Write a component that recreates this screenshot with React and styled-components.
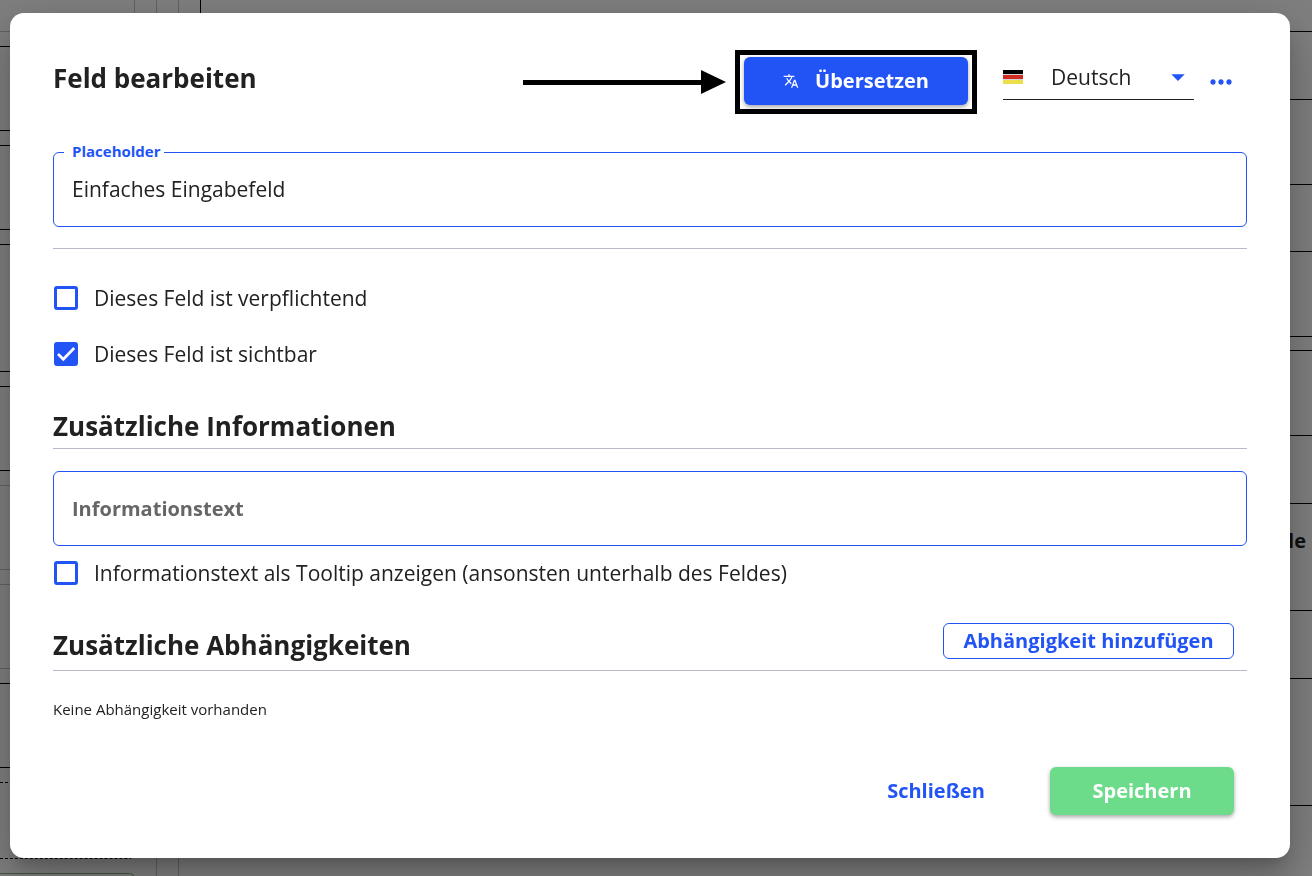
import React, { useState } from "react";
import styled, { createGlobalStyle } from "styled-components";
import { MdTranslate, MdMoreHoriz, MdArrowDropDown } from "react-icons/md";

const blue = "#2254f5";
const ink = "#212121";

const GlobalStyle = createGlobalStyle`
  *, *::before, *::after { box-sizing: border-box; }
  body {
    margin: 0;
    background: #fff;
    color: ${ink};
    font-family: "Open Sans", "Noto Sans", sans-serif;
    font-size: 21px;
    line-height: 28px;
  }
  button, input, select { font: inherit; color: inherit; }
  h2, h3, p { margin: 0; }
`;

/* Form builder behind the dialog */

const Builder = styled.div`
  display: flex;
  gap: 21px;
  height: 100vh;
  overflow: hidden;
`;

const Palette = styled.aside`
  width: 157px;
  flex: none;
  padding-right: 21px;
  border-right: 1px solid #c4c4c4;
`;

const PaletteHead = styled.div`
  height: 32px;
  margin-bottom: 14px;
  border: solid #c4c4c4;
  border-width: 0 1px 1px 0;
`;

const itemHeights = { short: 77, normal: 85, tall: 128 };

const PaletteItem = styled.div`
  height: ${(p) => itemHeights[p.$size || "normal"]}px;
  margin-bottom: 14px;
  border: 1px ${(p) => (p.$dashed ? "dashed" : "solid")} ${(p) => p.$color || "#000"};
  border-left: 0;
  border-radius: 0 6px 6px 0;
`;

const Canvas = styled.main`
  flex: 1;
  padding-left: 21px;
  border-left: 1px solid #c4c4c4;
`;

const CanvasBlock = styled.section`
  margin-bottom: 13px;
  border-left: 1px solid #000;
  border-bottom: 1px solid #000;
  border-top: ${(p) => (p.$open ? "0" : "1px solid #000")};
`;

const CanvasRow = styled.div`
  height: ${(p) => p.$height}px;
  display: flex;
  justify-content: flex-end;
  padding: 23px 6px 0 0;
  font-size: 20px;
  font-weight: 700;
  & + & { border-top: 1px solid #000; }
`;

/* Dialog */

const Backdrop = styled.div`
  position: fixed;
  inset: 0;
  padding: 13px 22px 18px 10px;
  background: rgba(0, 0, 0, 0.5);
  overflow: auto;
`;

const Dialog = styled.form`
  min-height: 100%;
  display: flex;
  flex-direction: column;
  padding: 37px 43px 43px;
  background: #fff;
  border-radius: 14px;
  box-shadow: 0 11px 15px -7px rgba(0, 0, 0, 0.2), 0 24px 38px 3px rgba(0, 0, 0, 0.14),
    0 9px 46px 8px rgba(0, 0, 0, 0.12);
`;

const Header = styled.header`
  display: flex;
  align-items: center;
  margin-bottom: 38px;
  padding-right: 10px;
`;

const Title = styled.h2`
  flex: 1;
  padding-bottom: 8px;
  font-size: 26px;
  line-height: 36px;
  font-weight: 700;
`;

const Highlight = styled.div`
  margin: 0 26px 0 9px;
  padding: 2px 4px 4px;
  border: 5px solid #000;
`;

const Button = styled.button`
  display: flex;
  align-items: center;
  justify-content: center;
  gap: 16px;
  min-width: ${(p) => p.$width}px;
  height: 48px;
  padding: 0 16px;
  border: 0;
  border-radius: 6px;
  background: ${(p) => p.$fill || "transparent"};
  color: ${(p) => (p.$fill ? "#fff" : blue)};
  font-size: 20px;
  font-weight: 700;
  box-shadow: ${(p) => (p.$fill ? "0 2px 4px rgba(0, 0, 0, 0.35)" : "none")};
`;

const OutlineButton = styled.button`
  height: 36px;
  min-width: 291px;
  margin-bottom: 4px;
  padding: 0 16px;
  border: 1px solid ${blue};
  border-radius: 6px;
  background: #fff;
  color: ${blue};
  font-size: 20px;
  font-weight: 700;
`;

const Language = styled.label`
  display: flex;
  align-items: center;
  align-self: flex-start;
  width: 191px;
  height: 50px;
  padding-top: 5px;
  margin-right: 11px;
  border-bottom: 1px solid ${ink};
  & > svg:last-child { flex: none; color: ${blue}; }
`;

const LanguageSelect = styled.select`
  flex: 1;
  min-width: 0;
  margin-left: 28px;
  padding: 0;
  border: 0;
  background: transparent;
  appearance: none;
`;

const MoreButton = styled.button`
  display: flex;
  padding: 0;
  border: 0;
  background: transparent;
  color: ${blue};
`;

const Field = styled.div`
  position: relative;
`;

const FieldLabel = styled.label`
  position: absolute;
  top: -11px;
  left: 11px;
  padding: 0 3px 0 8px;
  background: #fff;
  color: ${blue};
  font-size: 15px;
  line-height: 20px;
  font-weight: 700;
`;

const TextInput = styled.input`
  display: block;
  width: 100%;
  height: 75px;
  padding: 0 18px 2px;
  border: 1px solid ${blue};
  border-radius: 6px;
  background: #fff;
  outline: 0;
  &::placeholder { color: #666; font-size: 20px; font-weight: 700; opacity: 1; }
`;

const Rule = styled.hr`
  width: 100%;
  margin: 21px 0 0;
  border: 0;
  border-top: 1px solid #b8bac8;
`;

const Checks = styled.div`
  display: grid;
  gap: 28px;
  padding: 35px 0 40px;
`;

const CheckLabel = styled.label`
  display: flex;
  align-items: center;
  gap: 16px;
  padding-left: 1px;
`;

const CheckBox = styled.span`
  display: grid;
  width: 24px;
  height: 24px;
  margin: 2px 0;
  & > * { grid-area: 1 / 1; }
`;

const CheckInput = styled.input`
  appearance: none;
  width: 24px;
  height: 24px;
  margin: 0;
  border: 3px solid ${blue};
  border-radius: 3px;
  background: #fff;
  &:checked { background: ${blue}; }
  & + svg { visibility: hidden; pointer-events: none; }
  &:checked + svg { visibility: visible; }
`;

const SectionHead = styled.div`
  display: flex;
  justify-content: space-between;
  align-items: flex-end;
  padding: 0 13px ${(p) => (p.$withAction ? 7 : 4)}px 0;
  border-bottom: 1px solid #b8bac8;
`;

const SectionTitle = styled.h3`
  font-size: 26px;
  line-height: 36px;
  font-weight: 700;
`;

const InfoGroup = styled.section`
  display: grid;
  gap: 13px;
  padding: 22px 0 36px;
`;

const Empty = styled.p`
  padding-top: 28px;
  font-size: 15px;
  line-height: 20px;
`;

const Footer = styled.footer`
  display: flex;
  justify-content: flex-end;
  gap: 32px;
  margin-top: auto;
  padding-right: 13px;
`;

function GermanFlag() {
  return (
    <svg width="20" height="14" viewBox="0 0 20 14" aria-hidden="true">
      <rect width="20" height="14" fill="#d8d0d0" />
      <rect width="20" height="4" fill="#000" />
      <rect y="5" width="20" height="4" fill="#d02b20" />
      <rect y="10" width="20" height="4" fill="#ebe04a" />
    </svg>
  );
}

function Arrow() {
  return (
    <svg width="203" height="26" viewBox="0 0 203 26" aria-hidden="true">
      <path d="M0 11h178V1l25 12-25 12V16H0z" fill="#000" />
    </svg>
  );
}

function Check({ label, defaultChecked = false }) {
  const [checked, setChecked] = useState(defaultChecked);
  return (
    <CheckLabel>
      <CheckBox>
        <CheckInput type="checkbox" checked={checked} onChange={(e) => setChecked(e.target.checked)} />
        <svg width="24" height="24" viewBox="0 0 24 24" aria-hidden="true">
          <path d="M4 12l5.3 5.3L20.2 6" fill="none" stroke="#fff" strokeWidth="2.7" />
        </svg>
      </CheckBox>
      {label}
    </CheckLabel>
  );
}

export default function App() {
  return (
    <>
      <GlobalStyle />
      <Builder aria-hidden="true">
        <Palette>
          <PaletteHead />
          <PaletteItem />
          <PaletteItem />
          <PaletteItem $size="tall" />
          <PaletteItem />
          <PaletteItem $color="#c4c4c4" />
          <PaletteItem $color="#c4c4c4" />
          <PaletteItem />
          <PaletteItem $size="short" $dashed />
          <PaletteItem $color="#7fb77f" />
        </Palette>
        <Canvas>
          <CanvasBlock $open>
            <CanvasRow $height={31} />
            <CanvasRow $height={68} />
            <CanvasRow $height={85} />
            <CanvasRow $height={67} />
            <CanvasRow $height={85} />
          </CanvasBlock>
          <CanvasBlock>
            <CanvasRow $height={84} />
            <CanvasRow $height={68} />
            <CanvasRow $height={107}>Tabelle</CanvasRow>
            <CanvasRow $height={68} />
            <CanvasRow $height={127} />
          </CanvasBlock>
        </Canvas>
      </Builder>
      <Backdrop>
        <Dialog role="dialog" aria-labelledby="dialog-title" onSubmit={(e) => e.preventDefault()}>
          <Header>
            <Title id="dialog-title">Feld bearbeiten</Title>
            <Arrow />
            <Highlight>
              <Button type="button" $fill={blue} $width={224}>
                <MdTranslate size={16} aria-hidden="true" />
                Übersetzen
              </Button>
            </Highlight>
            <Language>
              <GermanFlag />
              <LanguageSelect aria-label="Sprache" defaultValue="de">
                <option value="de">Deutsch</option>
              </LanguageSelect>
              <MdArrowDropDown size={32} aria-hidden="true" />
            </Language>
            <MoreButton type="button" aria-label="Mehr">
              <MdMoreHoriz size={32} />
            </MoreButton>
          </Header>

          <Field>
            <TextInput id="placeholder" defaultValue="Einfaches Eingabefeld" />
            <FieldLabel htmlFor="placeholder">Placeholder</FieldLabel>
          </Field>
          <Rule />

          <Checks>
            <Check label="Dieses Feld ist verpflichtend" />
            <Check label="Dieses Feld ist sichtbar" defaultChecked />
          </Checks>

          <SectionHead>
            <SectionTitle>Zusätzliche Informationen</SectionTitle>
          </SectionHead>
          <InfoGroup>
            <TextInput aria-label="Informationstext" placeholder="Informationstext" />
            <Check label="Informationstext als Tooltip anzeigen (ansonsten unterhalb des Feldes)" />
          </InfoGroup>

          <SectionHead $withAction>
            <SectionTitle>Zusätzliche Abhängigkeiten</SectionTitle>
            <OutlineButton type="button">Abhängigkeit hinzufügen</OutlineButton>
          </SectionHead>
          <Empty>Keine Abhängigkeit vorhanden</Empty>

          <Footer>
            <Button type="button" $width={164}>Schließen</Button>
            <Button type="submit" $fill="#6cdc8b" $width={184}>Speichern</Button>
          </Footer>
        </Dialog>
      </Backdrop>
    </>
  );
}
